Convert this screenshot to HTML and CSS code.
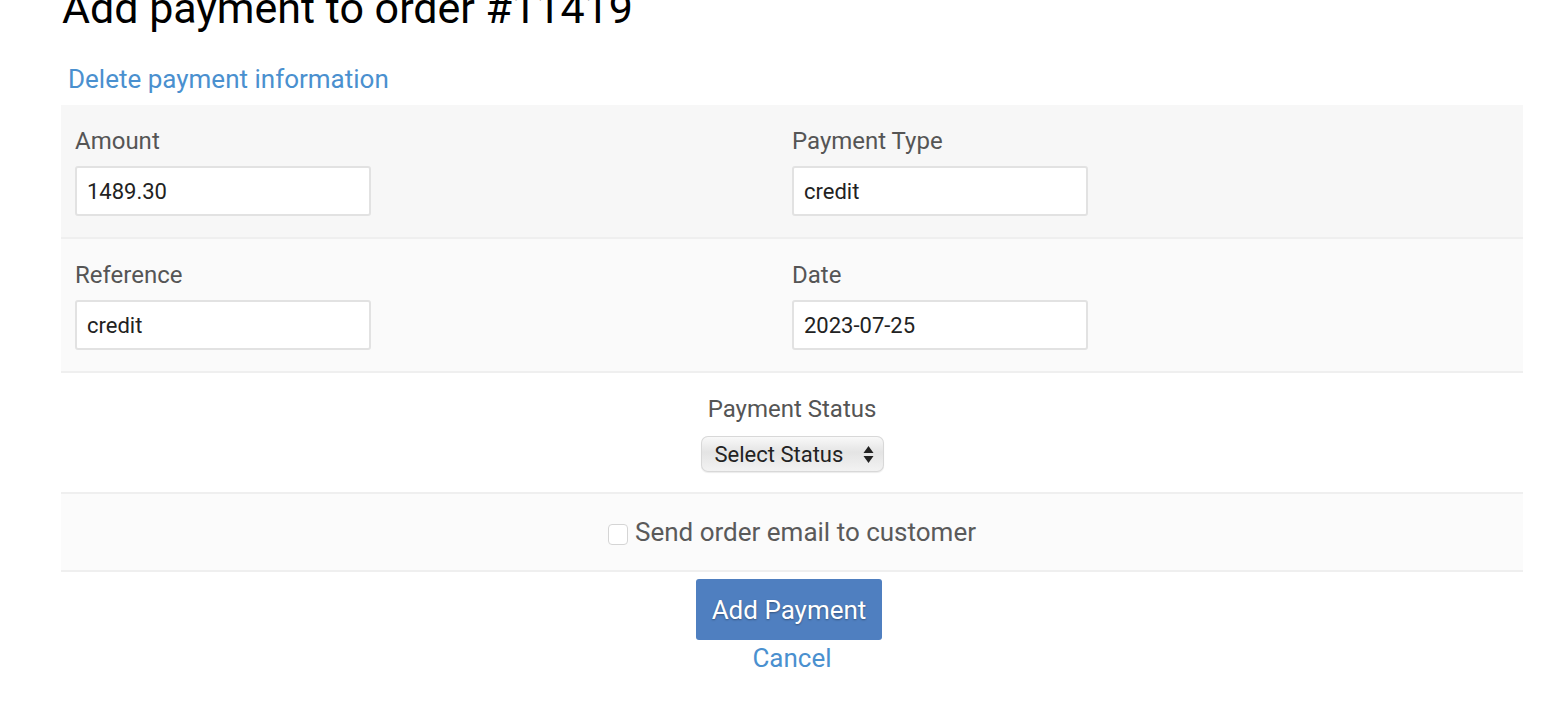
FILE: index.html
```html
<!DOCTYPE html>
<html lang="en">

<head>
    <meta charset="UTF-8">
    <title>Add payment to order #11419</title>
    <link rel="stylesheet" href="styles.css">
</head>

<body>

    <div class="wrap">
        <h1 class="title">Add payment to order #11419</h1>

        <a class="delete-link" href="#">Delete payment information</a>

        <form id="payment">
            <!-- amount / type -->
            <div class="row row-dark">
                <div class="field">
                    <label for="amount">Amount</label>
                    <input type="text" id="amount" name="amount" value="1489.30">
                </div>
                <div class="field">
                    <label for="payment_type">Payment Type</label>
                    <input type="text" id="payment_type" name="payment_type" value="credit">
                </div>
            </div>

            <!-- reference / date -->
            <div class="row row-light">
                <div class="field">
                    <label for="reference">Reference</label>
                    <input type="text" id="reference" name="reference" value="credit">
                </div>
                <div class="field">
                    <label for="date">Date</label>
                    <input type="text" id="date" name="date" value="2023-07-25">
                </div>
            </div>

            <!-- status -->
            <div class="row-center row-white">
                <label for="status">Payment Status</label>
                <div class="select-box">
                    <span>Select Status</span>
                    <svg width="11" height="19" viewBox="0 0 11 19">
                        <path d="M5.5 1 L10.5 8 H0.5 Z" fill="#222"/>
                        <path d="M5.5 18 L10.5 11 H0.5 Z" fill="#222"/>
                    </svg>
                </div>
            </div>

            <!-- email -->
            <div class="row-center row-mail">
                <label class="check-label"><span class="check"></span>Send order email to customer</label>
            </div>

            <div class="actions">
                <input type="submit" value="Add Payment">
                <a class="cancel" href="#">Cancel</a>
            </div>
        </form>
    </div>

</body>

</html>
```

FILE: styles.css
```css
body {
    font-family: Roboto, "Liberation Sans", sans-serif;
    margin: 0;
    color: #555;
}

.wrap {
    margin: 0 25px 0 61px;
}

.title {
    font-size: 43px;
    font-weight: 400;
    color: #000;
    margin: -16px 0 0 1px;
    line-height: 48px;
}

.delete-link {
    display: inline-block;
    margin: 32px 0 0 7px;
    font-size: 26px;
    line-height: 30px;
    color: #4a90cf;
    text-decoration: none;
}

form {
    margin-top: -4px;
}

.row {
    display: grid;
    grid-template-columns: 717px 1fr;
    padding: 22px 14px 21px;
    border-bottom: 2px solid #efefef;
}

.row-dark {
    background-color: #f7f7f7;
    margin-top: 15px;
}

.row-light {
    background-color: #fafafa;
}

.row-white {
    background-color: #fff;
}

.row-mail {
    background-color: #fbfbfb;
}

label {
    display: block;
    font-size: 24px;
    line-height: 28px;
    margin-bottom: 11px;
}

input[type="text"] {
    width: 296px;
    height: 50px;
    padding: 0 10px;
    box-sizing: border-box;
    border: 2px solid #e2e2e2;
    border-radius: 3px;
    background: #fff;
    font-family: inherit;
    font-size: 22px;
    color: #222;
}

.row-center {
    display: flex;
    flex-direction: column;
    align-items: center;
    border-bottom: 2px solid #efefef;
}

.row-white {
    padding: 22px 0 20px;
}

.row-white label {
    margin-bottom: 13px;
}

.select-box {
    display: flex;
    align-items: center;
    justify-content: space-between;
    width: 183px;
    height: 36px;
    box-sizing: border-box;
    padding: 0 10px 0 14px;
    border-radius: 7px;
    background: linear-gradient(#fafafa, #e4e4e4 45%, #f3f3f3);
    box-shadow: inset 0 0 0 1px #d8d8d8, 0 1px 1px rgba(0, 0, 0, 0.08);
    font-size: 22px;
    color: #222;
}

.row-mail {
    padding: 23px 0;
}

.check-label {
    display: flex;
    align-items: center;
    font-size: 26px;
    margin: 0;
    line-height: 30px;
    color: #5a5a5a;
}

.check {
    width: 18px;
    height: 19px;
    border: 1px solid #d5d5d5;
    border-radius: 4px;
    background: #fff;
    margin: 4px 7px 0 0;
}

.actions {
    display: flex;
    flex-direction: column;
    align-items: center;
    padding-top: 7px;
}

input[type="submit"] {
    width: 186px;
    height: 61px;
    background-color: #4f7fc0;
    border: none;
    border-radius: 3px;
    color: white;
    font-family: inherit;
    font-size: 26px;
    text-shadow: 0 1px 2px rgba(0, 0, 0, 0.35);
    cursor: pointer;
    margin-left: -6px;
}

.cancel {
    font-size: 26px;
    line-height: 36px;
    color: #4a90cf;
    text-decoration: none;
}
```
